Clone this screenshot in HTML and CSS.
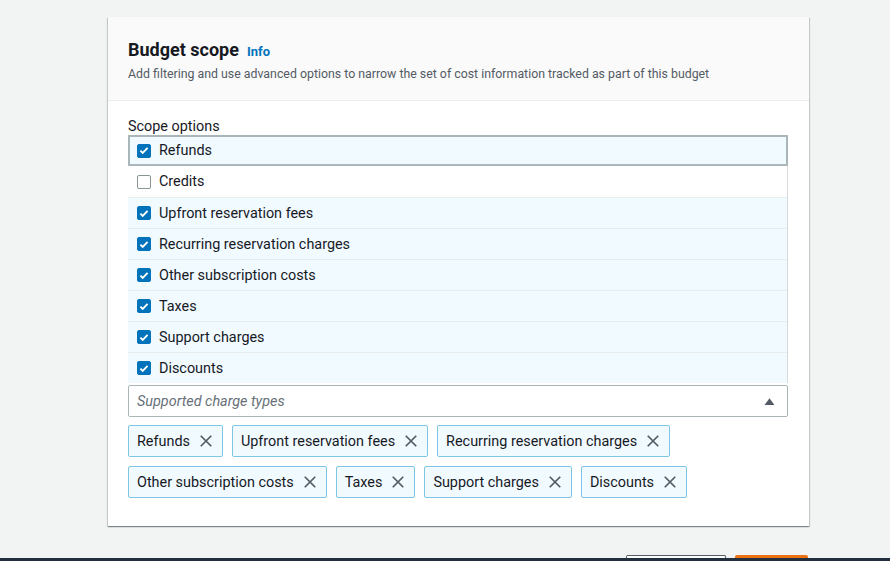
FILE: index.html
```html
<!DOCTYPE html>
<html>
<head>
<meta charset="utf-8">
<link rel="stylesheet" href="styles.css">
</head>
<body>
<div class="page">
  <div class="card">
    <div class="card-header">
      <h2 class="title">Budget scope <a class="info">Info</a></h2>
      <p class="desc">Add filtering and use advanced options to narrow the set of cost information tracked as part of this budget</p>
    </div>
    <div class="card-body">
      <div class="label">Scope options</div>
      <ul class="list">
        <li class="opt sel focus"><span class="cb on"><svg viewBox="0 0 14 14"><path d="M2.8 7.2l2.7 2.7L11.2 4"/></svg></span>Refunds</li>
        <li class="opt"><span class="cb"></span>Credits</li>
        <li class="opt sel"><span class="cb on"><svg viewBox="0 0 14 14"><path d="M2.8 7.2l2.7 2.7L11.2 4"/></svg></span>Upfront reservation fees</li>
        <li class="opt sel"><span class="cb on"><svg viewBox="0 0 14 14"><path d="M2.8 7.2l2.7 2.7L11.2 4"/></svg></span>Recurring reservation charges</li>
        <li class="opt sel"><span class="cb on"><svg viewBox="0 0 14 14"><path d="M2.8 7.2l2.7 2.7L11.2 4"/></svg></span>Other subscription costs</li>
        <li class="opt sel"><span class="cb on"><svg viewBox="0 0 14 14"><path d="M2.8 7.2l2.7 2.7L11.2 4"/></svg></span>Taxes</li>
        <li class="opt sel"><span class="cb on"><svg viewBox="0 0 14 14"><path d="M2.8 7.2l2.7 2.7L11.2 4"/></svg></span>Support charges</li>
        <li class="opt sel"><span class="cb on"><svg viewBox="0 0 14 14"><path d="M2.8 7.2l2.7 2.7L11.2 4"/></svg></span>Discounts</li>
      </ul>
      <div class="select">
        <span class="ph">Supported charge types</span>
        <svg class="caret" viewBox="0 0 12 10"><path d="M0.5 9L6 1.5 11.5 9z"/></svg>
      </div>
      <div class="tokens">
        <span class="token">Refunds<svg class="x" viewBox="0 0 16 16"><path d="M2 2l12 12M14 2L2 14"/></svg></span>
        <span class="token">Upfront reservation fees<svg class="x" viewBox="0 0 16 16"><path d="M2 2l12 12M14 2L2 14"/></svg></span>
        <span class="token">Recurring reservation charges<svg class="x" viewBox="0 0 16 16"><path d="M2 2l12 12M14 2L2 14"/></svg></span>
        <span class="token">Other subscription costs<svg class="x" viewBox="0 0 16 16"><path d="M2 2l12 12M14 2L2 14"/></svg></span>
        <span class="token">Taxes<svg class="x" viewBox="0 0 16 16"><path d="M2 2l12 12M14 2L2 14"/></svg></span>
        <span class="token">Support charges<svg class="x" viewBox="0 0 16 16"><path d="M2 2l12 12M14 2L2 14"/></svg></span>
        <span class="token">Discounts<svg class="x" viewBox="0 0 16 16"><path d="M2 2l12 12M14 2L2 14"/></svg></span>
      </div>
    </div>
  </div>
  <div class="footer">
    <span class="btn cancel"></span>
    <span class="btn primary"></span>
  </div>
  <div class="bottom-bar"></div>
</div>
</body>
</html>
```
FILE: styles.css
```css
* { box-sizing: border-box; }
html, body { margin: 0; padding: 0; }
body {
  background: #f2f3f3;
  font-family: Roboto, "Liberation Sans", Arial, sans-serif;
  color: #16191f;
  width: 890px;
  height: 561px;
  overflow: hidden;
}
.page {
  height: 561px;
  display: flex;
  flex-direction: column;
  padding-top: 17px;
}
.card {
  margin-left: 108px;
  width: 701px;
  background: #fff;
  box-shadow: 0 1px 1px 0 rgba(0,28,36,.3), 1px 1px 1px 0 rgba(0,28,36,.15), -1px 1px 1px 0 rgba(0,28,36,.15);
}
.card-header {
  background: #fafafa;
  border-bottom: 1px solid #eaeded;
  padding: 21px 20px 17px;
  height: 84px;
}
.title {
  margin: 0;
  font-size: 18px;
  font-weight: 700;
  line-height: 24px;
  display: flex;
  align-items: baseline;
  gap: 8px;
}
.info {
  color: #0073bb;
  font-size: 13px;
  font-weight: 700;
}
.desc {
  margin: 1px 0 0;
  font-size: 12.35px;
  line-height: 18px;
  color: #545b64;
}
.card-body {
  padding: 17px 20px 28px;
}
.label {
  font-size: 14.4px;
  line-height: 17px;
  height: 17px;
}
.list {
  list-style: none;
  margin: 0;
  padding: 0;
  width: 660px;
  border-right: 1px solid #d5dbdb;
}
.opt {
  height: 31px;
  display: flex;
  align-items: center;
  padding-left: 9px;
  font-size: 14.4px;
  border-top: 1px solid #eaeded;
}
.opt.sel { background: #f1faff; }
.opt.focus {
  border: 2px solid #aab7b8;
  padding-left: 7px;
  margin-right: -1px;
}
.opt:nth-child(2) { border-top: none; }
.cb {
  width: 14px;
  height: 14px;
  border: 1px solid #879596;
  border-radius: 2px;
  margin-right: 8px;
  background: #fff;
  display: flex;
  align-items: center;
  justify-content: center;
  flex-shrink: 0;
}
.cb.on {
  background: #0073bb;
  border-color: #0073bb;
}
.cb svg {
  width: 13px;
  height: 13px;
  fill: none;
  stroke: #fff;
  stroke-width: 2.2;
}
.select {
  margin-top: 2px;
  width: 660px;
  height: 32px;
  border: 1px solid #aab7b8;
  border-radius: 2px;
  display: flex;
  align-items: center;
  justify-content: space-between;
  padding: 0 12px 0 8px;
  background: #fff;
}
.ph {
  font-style: italic;
  color: #687078;
  font-size: 14.4px;
}
.caret {
  width: 11px;
  height: 9px;
  fill: #545b64;
}
.tokens {
  margin-top: 8px;
  display: flex;
  flex-wrap: wrap;
  gap: 9px 9px;
}
.token {
  height: 32px;
  display: inline-flex;
  align-items: center;
  border: 1px solid #7fc6e6;
  border-radius: 2px;
  background: #f1faff;
  padding: 0 9px 0 8px;
  font-size: 14.4px;
}
.x {
  width: 14px;
  height: 14px;
  margin-left: 9px;
  fill: none;
  stroke: #545b64;
  stroke-width: 2;
}
.footer {
  margin-top: auto;
  display: flex;
  justify-content: flex-end;
  padding-right: 82px;
  gap: 9px;
  height: 3px;
  align-items: flex-end;
}
.btn {
  height: 3px;
  border-radius: 2px 2px 0 0;
}
.cancel {
  width: 100px;
  border: 1px solid #545b64;
  border-bottom: none;
  background: #fff;
}
.primary {
  width: 73px;
  background: #ec7211;
}
.bottom-bar {
  height: 3px;
  background: #232f3e;
}
```
